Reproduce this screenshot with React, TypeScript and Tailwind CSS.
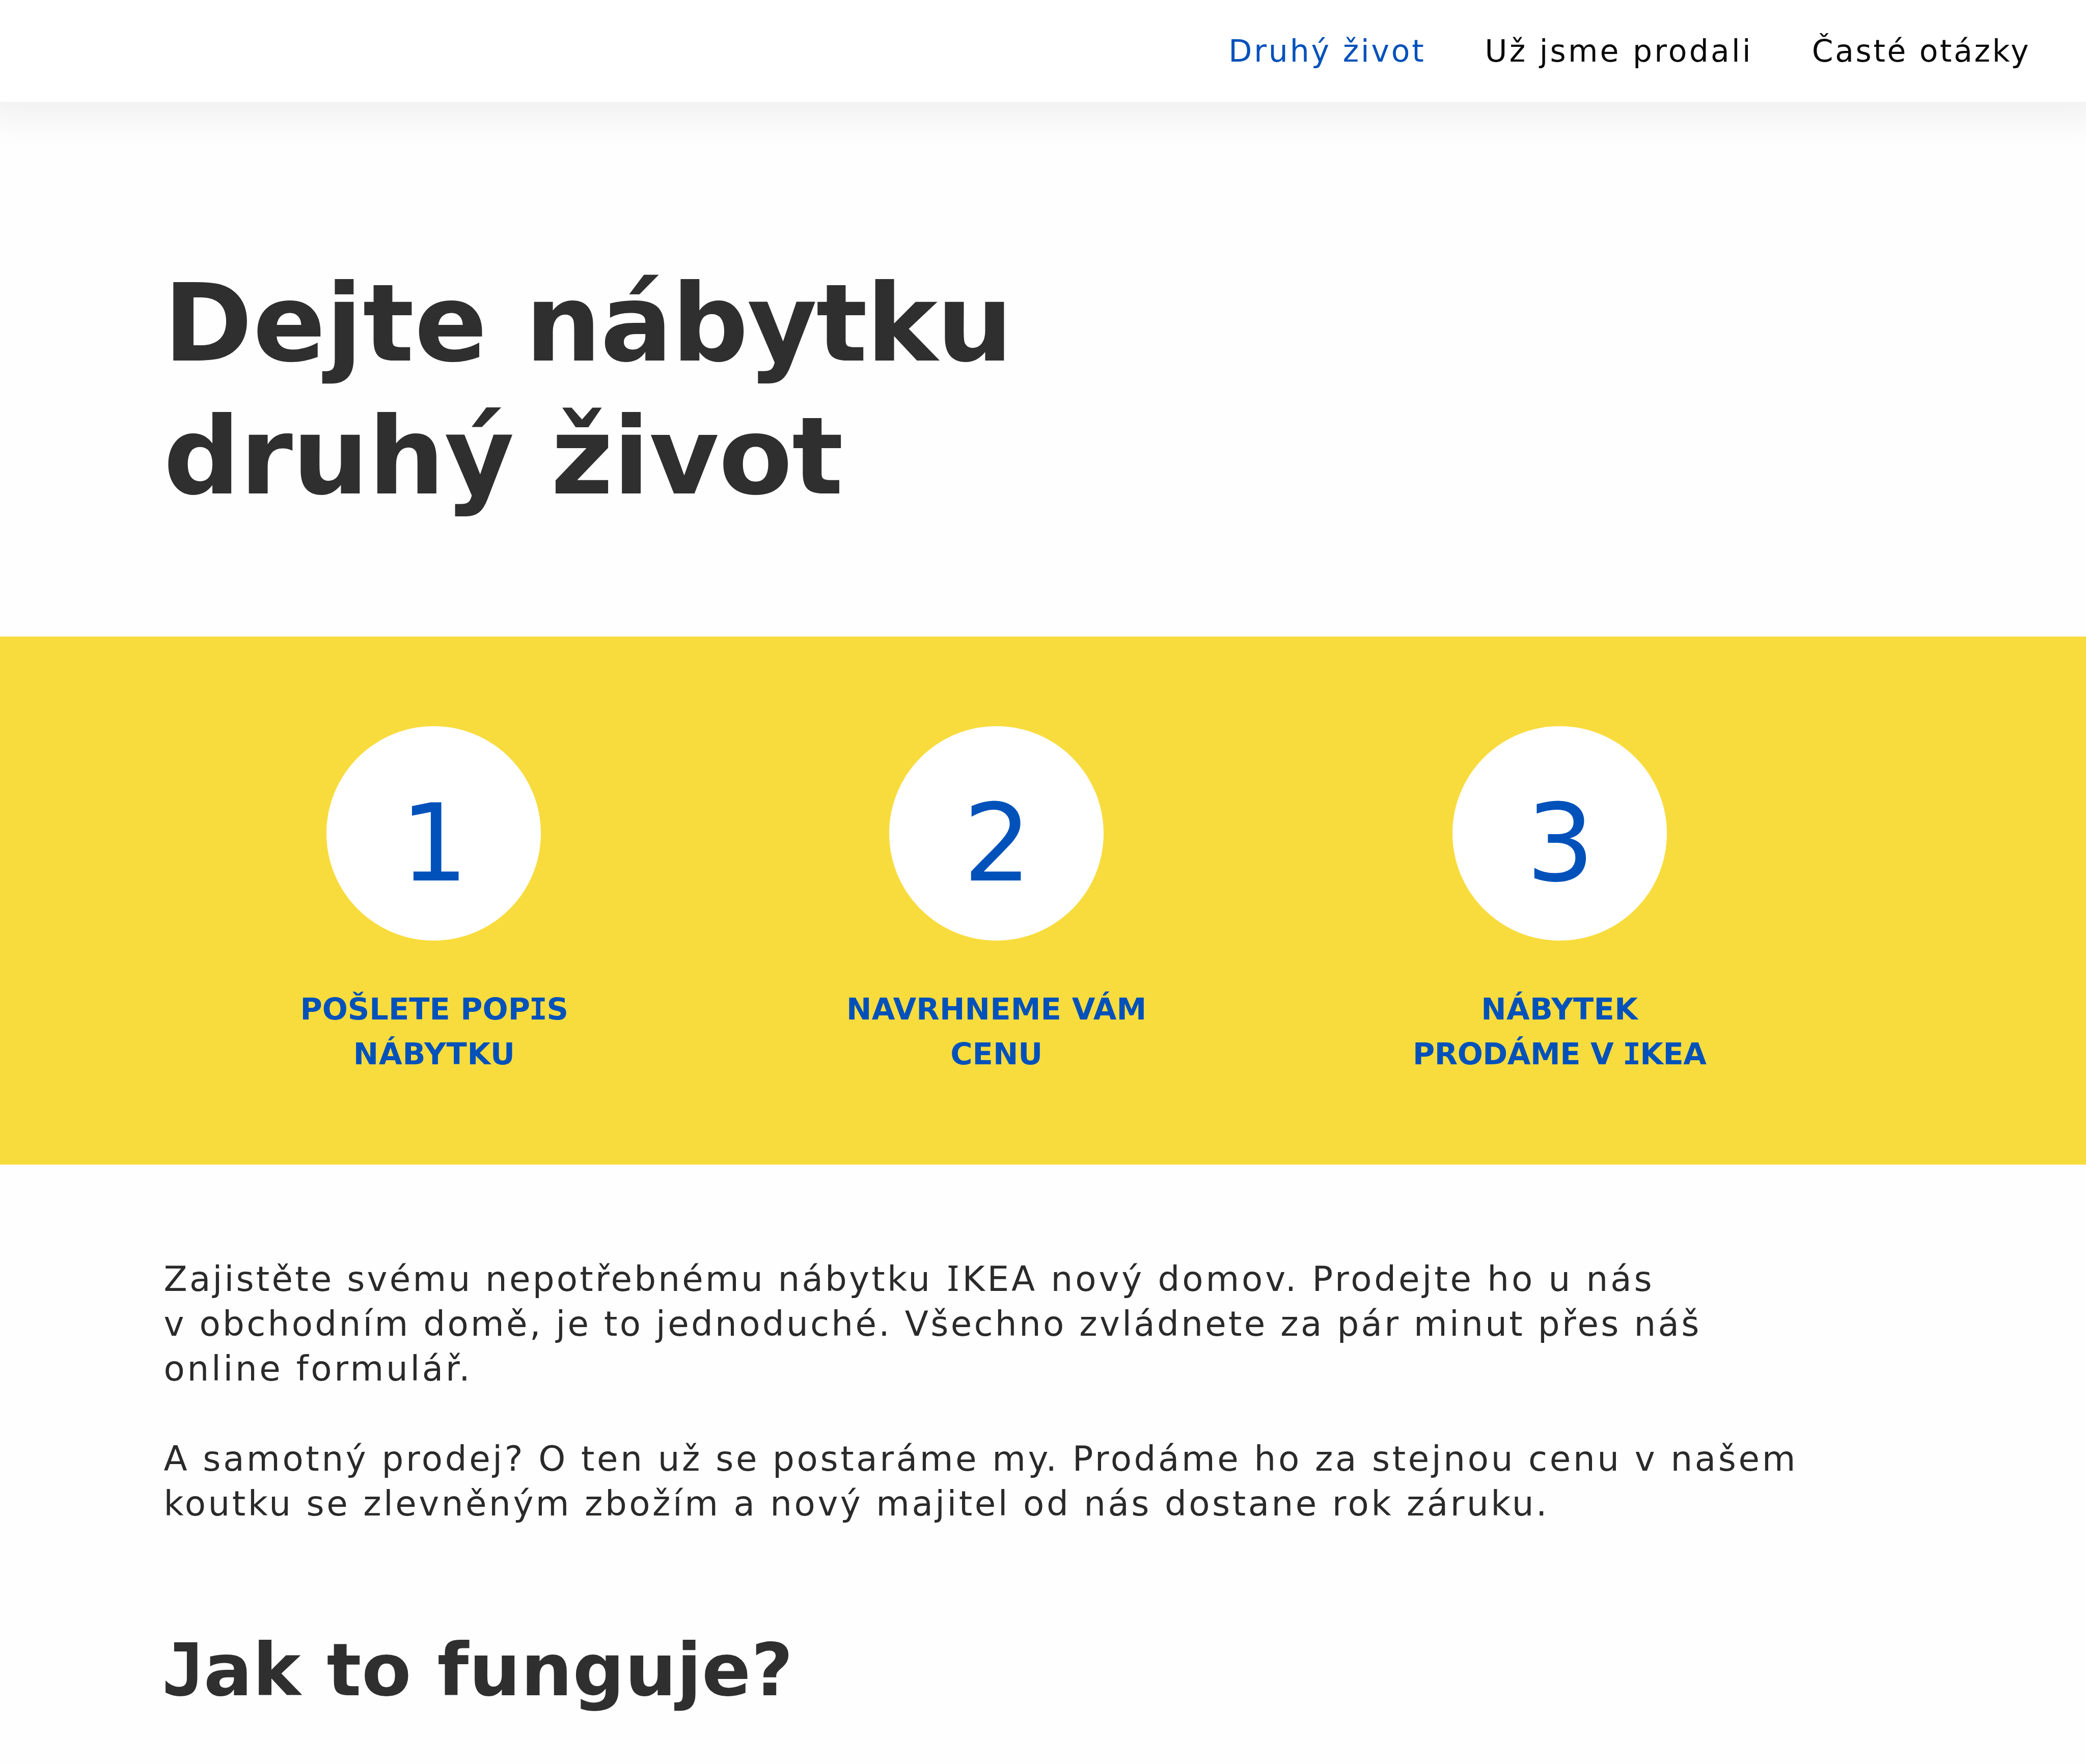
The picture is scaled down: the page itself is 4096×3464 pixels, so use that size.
import * as React from "react";
import clsx from "clsx";

const navItems = [
	{ label: "Druhý život", tracking: "tracking-[3.8px]", active: true },
	{ label: "Už jsme prodali", tracking: "tracking-[4.2px]", active: false },
	{ label: "Časté otázky", tracking: "tracking-[3.6px]", active: false },
];

// Capital I with slab serifs
const BoldI = () => (
	<span className="font-['DejaVu_Sans_Mono',monospace] leading-[0] -ml-[2px] -mr-px">
		I
	</span>
);

const TextI = () => (
	<span className="font-['Noto_Sans',sans-serif] text-[69px] leading-[0] ml-[4px] mr-[2px]">
		I
	</span>
);

const Header = () => {
	return (
		<header className="relative h-[200px] shrink-0 bg-white shadow-[0_4px_64px_32px_rgba(0,0,0,0.056)]">
			<nav className="flex h-full items-center justify-end gap-[116px] pr-[109px]">
				{navItems.map((item) => (
					<a
						key={item.label}
						href="#"
						className={clsx(
							"text-[60px] leading-[200px] whitespace-nowrap",
							item.tracking,
							item.active ? "text-[#0051ba]" : "text-[#0a0a0a]"
						)}
					>
						{item.label}
					</a>
				))}
			</nav>
		</header>
	);
};

interface StepProps {
	number: number;
	children: React.ReactNode;
}

const Step = ({ number, children }: StepProps) => {
	return (
		<div className="flex flex-col items-center text-[#0051ba]">
			<div className="flex size-[421px] items-center justify-center rounded-full bg-white pt-[40px] pl-[3px] text-[211px] leading-none">
				{number}
			</div>
			<h3 className="mt-[91px] text-center text-[59px] leading-[88.2px] font-bold whitespace-nowrap">
				{children}
			</h3>
		</div>
	);
};

const Steps = () => {
	return (
		<section className="grid h-[1037px] shrink-0 grid-cols-[repeat(3,1105.5px)] bg-[#f8dc3e] pt-[176px] pl-[298.5px]">
			<Step number={1}>
				<span className="block pl-[3px]">
					POŠLETE POP
					<BoldI />S
				</span>
				<span className="block pl-[3px] tracking-[0.8px]">NÁBYTKU</span>
			</Step>
			<Step number={2}>
				<span className="block tracking-[0.2px]">NAVRHNEME VÁM</span>
				<span className="block">CENU</span>
			</Step>
			<Step number={3}>
				<span className="block tracking-[0.3px]">NÁBYTEK</span>
				<span className="block tracking-[-0.5px]">
					PRODÁME V <BoldI />
					KEA
				</span>
			</Step>
		</section>
	);
};

const Intro = () => {
	return (
		<section className="flex flex-col gap-[88.2px] text-[67.5px] leading-[88.2px] whitespace-nowrap text-[#2a2a2a]">
			<p>
				<span className="block tracking-[4.2px]">
					Zajistěte svému nepotřebnému nábytku <TextI />
					<span className="tracking-[4.9px]">
						KEA nový domov. Prodejte ho u nás
					</span>
				</span>
				<span className="block tracking-[4.29px]">
					v obchodním domě, je to jednoduché. Všechno zvládnete za pár minut
					přes náš
				</span>
				<span className="block tracking-[4.7px]">online formulář.</span>
			</p>
			<p>
				<span className="block tracking-[4.61px]">
					A samotný prodej? O ten už se postaráme my. Prodáme ho za stejnou cenu
					v našem
				</span>
				<span className="block tracking-[4.5px]">
					koutku se zlevněným zbožím a nový majitel od nás dostane rok záruku.
				</span>
			</p>
		</section>
	);
};

const App = () => {
	return (
		<div className="flex h-[3464px] w-[4096px] flex-col overflow-hidden bg-[#fefefe] font-['DejaVu_Sans',Verdana,sans-serif]">
			<Header />
			<main className="flex flex-col">
				<h1 className="pt-[305px] pb-[224px] pl-[321px] text-[210.7px] leading-[260.5px] font-bold tracking-[-0.8px] text-[#2f2f2f]">
					<span className="tracking-[0.5px]">Dejte </span>
					<span className="tracking-[-2.2px]">nábytku</span>
					<br />
					druhý život
				</h1>
				<Steps />
				<div className="pt-[181px] pl-[321.5px]">
					<Intro />
					<h2 className="mt-[195px] -ml-[4px] text-[142px] leading-[176px] font-bold tracking-[0.7px] text-[#2f2f2f]">
						<span className="font-['DejaVu_Sans_Mono',monospace] leading-[0] -mr-[4px]">
							J
						</span>
						ak to funguje?
					</h2>
				</div>
			</main>
		</div>
	);
};

export default App;
